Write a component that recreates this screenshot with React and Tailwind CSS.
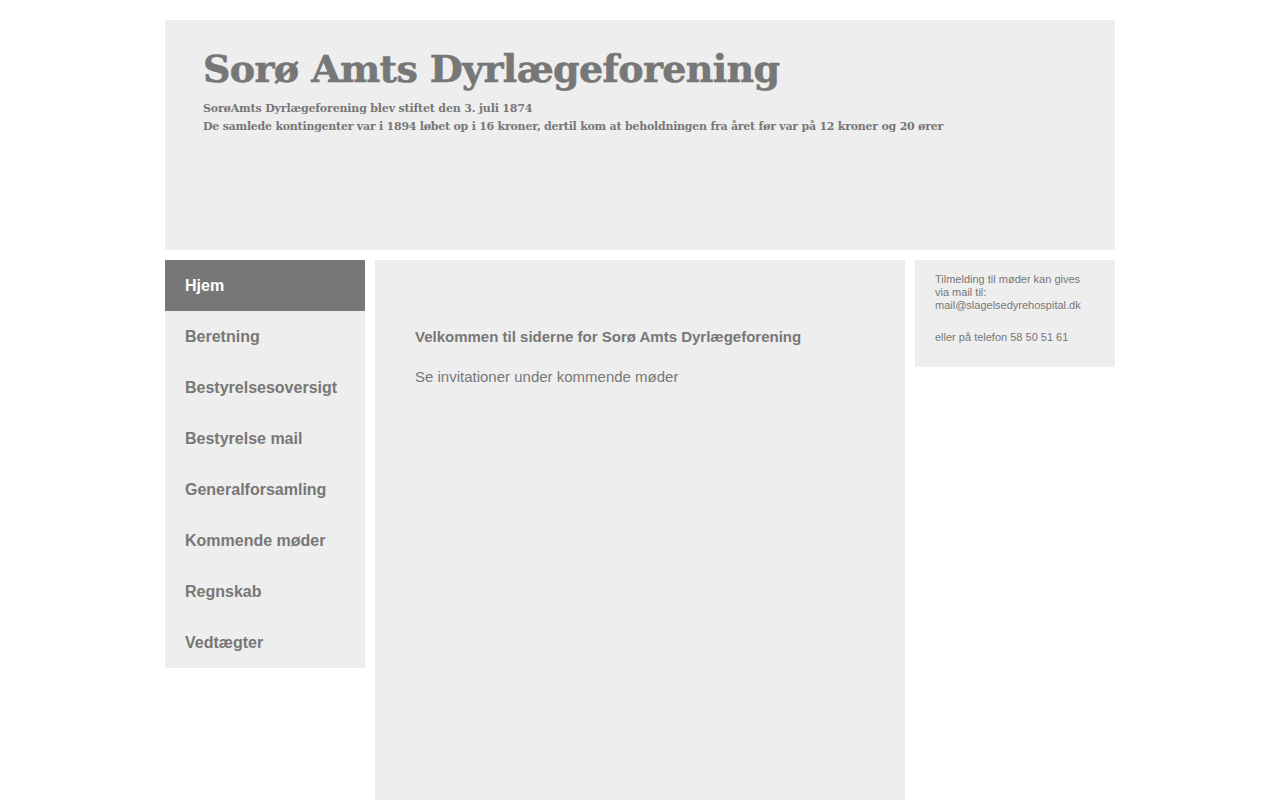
const NAV_ITEMS = [
  "Hjem",
  "Beretning",
  "Bestyrelsesoversigt",
  "Bestyrelse mail",
  "Generalforsamling",
  "Kommende møder",
  "Regnskab",
  "Vedtægter",
];

const App = () => {
  return (
    <div className="mx-auto w-[950px] pt-5 font-['Liberation_Sans',sans-serif] text-[#777777]">
      <header className="h-[230px] bg-[#eeeeee] pl-[38px] pt-[25px] font-['DejaVu_Serif',serif] font-bold">
        <h1 className="text-[38px] leading-[48px] tracking-[-0.65px] [-webkit-text-stroke:0.6px_#777777]">Sorø Amts Dyrlægeforening</h1>
        <p className="mt-[7px] text-[11px] leading-[18px] tracking-[-0.17px]">SorøAmts Dyrlægeforening blev stiftet den 3. juli 1874</p>
        <p className="text-[11px] leading-[18px] tracking-[-0.24px]">De samlede kontingenter var i 1894 løbet op i 16 kroner, dertil kom at beholdningen fra året før var på 12 kroner og 20 ører</p>
      </header>

      <div className="mt-[10px] flex items-start gap-[10px]">
        <nav className="w-[200px] bg-[#eeeeee]">
          {NAV_ITEMS.map((item, index) => (
            <a
              key={item}
              href="#"
              className={`block h-[51px] px-5 text-base font-bold leading-[51px] ${index === 0 ? "bg-[#777777] text-white" : ""}`}
            >
              {item}
            </a>
          ))}
        </nav>

        <main className="h-[540px] w-[530px] bg-[#eeeeee] px-10 pt-[67px] text-[15px] leading-[20px]">
          <p className="font-bold">Velkommen til siderne for Sorø Amts Dyrlægeforening</p>
          <p className="mt-5">Se invitationer under kommende møder</p>
        </main>

        <aside className="h-[107px] w-[200px] bg-[#eeeeee] px-5 pt-[13px] text-[11px] leading-[13px]">
          <p>Tilmelding til møder kan gives</p>
          <p>via mail til:</p>
          <p>mail@slagelsedyrehospital.dk</p>
          <p className="mt-[19px]">eller på telefon 58 50 51 61</p>
        </aside>
      </div>
    </div>
  );
};

export default App;
